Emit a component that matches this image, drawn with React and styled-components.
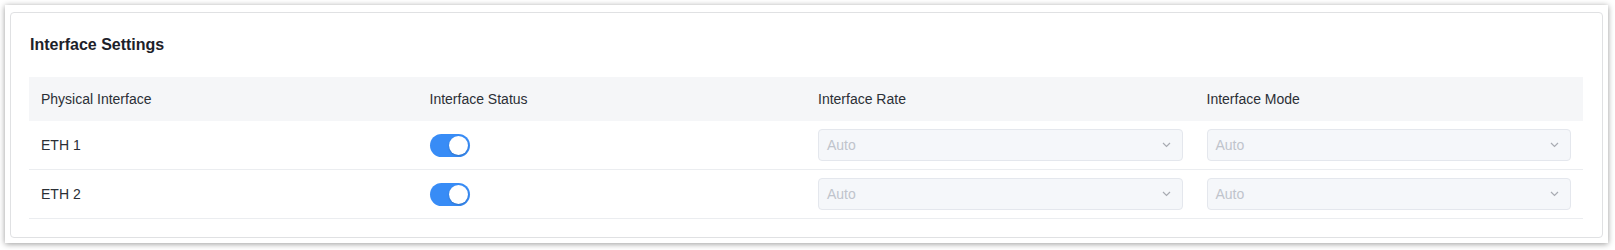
import React, { useState } from "react";
import styled, { createGlobalStyle } from "styled-components";

const GlobalStyle = createGlobalStyle`
  body {
    margin: 0;
    background: #ffffff;
    font-family: "Liberation Sans", Arial, sans-serif;
  }
`;

const Frame = styled.div`
  margin: 5px 7px 7px 5px;
  height: 238px;
  box-sizing: border-box;
  padding: 7px 5px 5px 5px;
  background: #ffffff;
  box-shadow: 0 1px 6px rgba(0, 0, 0, 0.4);
`;

const Card = styled.div`
  height: 100%;
  box-sizing: border-box;
  border: 1px solid #e0e1e3;
  border-radius: 4px;
  padding: 22px 19px 0 18px;
`;

const Title = styled.h2`
  margin: 0 0 22px 1px;
  font-size: 16px;
  line-height: 20px;
  font-weight: 700;
  color: #1d2129;
`;

const Table = styled.div`
  display: flex;
  flex-direction: column;
`;

const Row = styled.div`
  display: grid;
  grid-template-columns: repeat(4, 1fr);
  align-items: center;
  height: ${(p) => (p.$header ? "44px" : "48px")};
  background: ${(p) => (p.$header ? "#f5f6f8" : "#ffffff")};
  border-bottom: ${(p) => (p.$header ? "none" : "1px solid #ebedf0")};
`;

const Cell = styled.div`
  padding: 0 12px;
  font-size: 14px;
  color: #2b2f36;
  display: flex;
  align-items: center;
`;

const Switch = styled.button`
  width: 40px;
  height: 23px;
  border: none;
  border-radius: 12px;
  padding: 0;
  background: ${(p) => (p.$on ? "#388cf6" : "#c9cdd4")};
  position: relative;
  cursor: pointer;

  &::after {
    content: "";
    position: absolute;
    top: 2px;
    left: ${(p) => (p.$on ? "19px" : "2px")};
    width: 19px;
    height: 19px;
    border-radius: 50%;
    background: #ffffff;
    box-shadow: 0 1px 2px rgba(0, 0, 0, 0.2);
  }
`;

const Select = styled.div`
  flex: 1;
  height: 32px;
  box-sizing: border-box;
  border: 1px solid #e4e7ed;
  border-radius: 4px;
  background: #f5f7fa;
  display: flex;
  align-items: center;
  justify-content: space-between;
  padding: 0 11px 0 8px;
  font-size: 14px;
  color: #c0c4cc;
  cursor: not-allowed;
`;

const Chevron = () => (
  <svg width="9" height="6" viewBox="0 0 9 6" fill="none">
    <path d="M1 1l3.5 3.5L8 1" stroke="#a8abb2" strokeWidth="1.2" />
  </svg>
);

const ports = [
  { id: 1, name: "ETH 1" },
  { id: 2, name: "ETH 2" },
];

export default function App() {
  const [status, setStatus] = useState({ 1: true, 2: true });

  return (
    <>
      <GlobalStyle />
      <Frame>
        <Card>
          <Title>Interface Settings</Title>
          <Table>
            <Row $header>
              <Cell>Physical Interface</Cell>
              <Cell>Interface Status</Cell>
              <Cell>Interface Rate</Cell>
              <Cell>Interface Mode</Cell>
            </Row>
            {ports.map((port) => (
              <Row key={port.id}>
                <Cell>{port.name}</Cell>
                <Cell>
                  <Switch
                    $on={status[port.id]}
                    onClick={() =>
                      setStatus({ ...status, [port.id]: !status[port.id] })
                    }
                  />
                </Cell>
                <Cell>
                  <Select>
                    Auto
                    <Chevron />
                  </Select>
                </Cell>
                <Cell>
                  <Select>
                    Auto
                    <Chevron />
                  </Select>
                </Cell>
              </Row>
            ))}
          </Table>
        </Card>
      </Frame>
    </>
  );
}
